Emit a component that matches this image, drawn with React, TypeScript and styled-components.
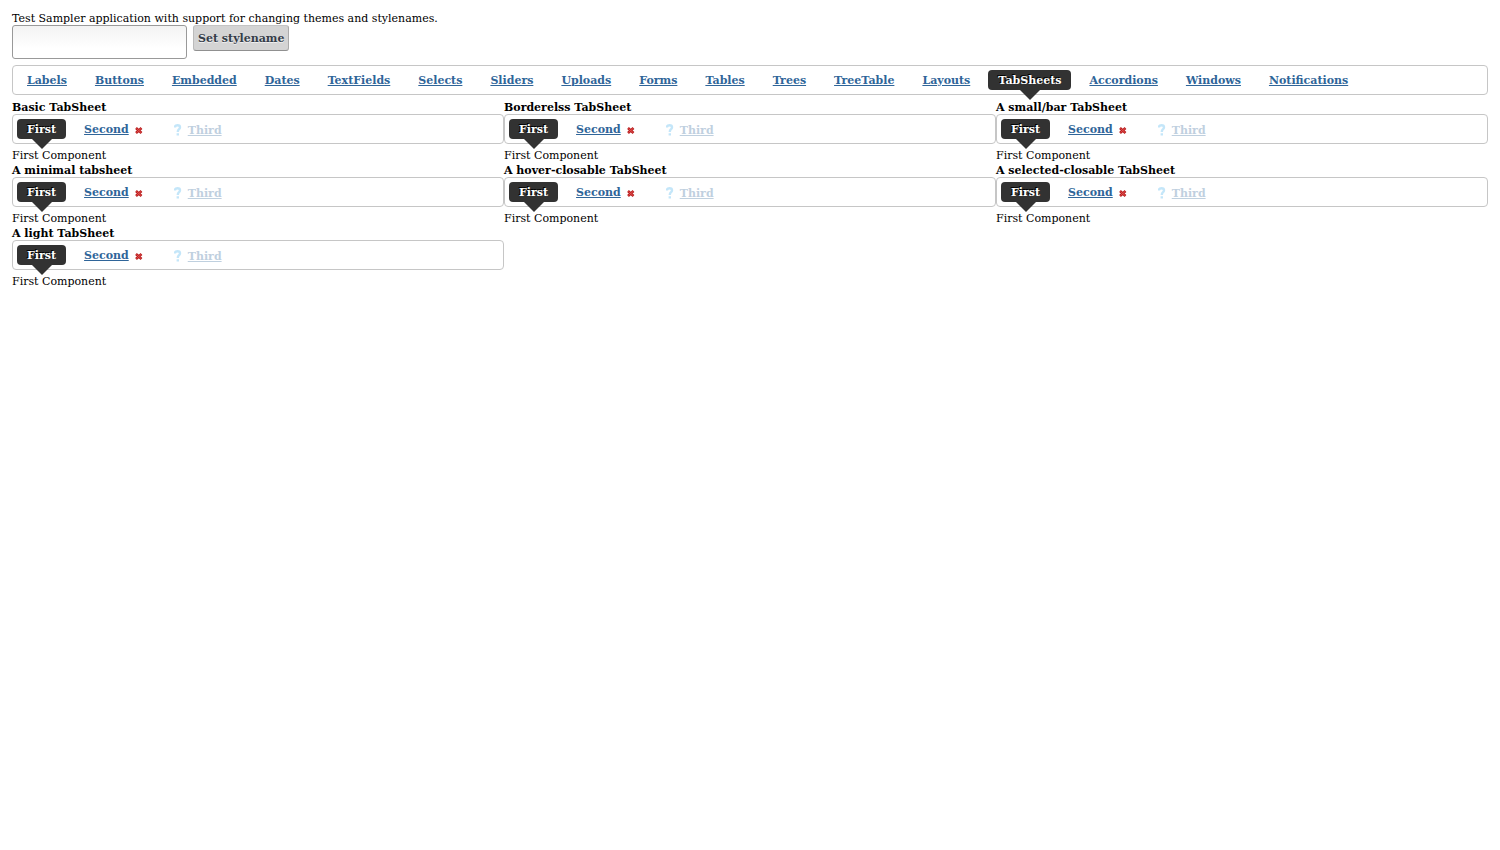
import React from "react";
import styled, { createGlobalStyle } from "styled-components";

const GlobalStyle = createGlobalStyle`
  body {
    margin: 0;
    background: #fff;
    color: #000;
    font: 11px/14px "DejaVu Serif", serif;
  }
`;

const Page = styled.main`
  padding: 12px;
`;

const Intro = styled.div`
  line-height: 13px;
`;

const Toolbar = styled.form`
  display: flex;
  align-items: flex-start;
  gap: 6px;
  margin-bottom: 6px;
`;

const StyleField = styled.input`
  box-sizing: border-box;
  width: 175px;
  height: 34px;
  padding: 4px;
  border: 1px solid #999;
  border-radius: 3px;
  background: linear-gradient(#f3f3f3, #fff 70%);
  font: inherit;
`;

const SetButton = styled.button`
  box-sizing: border-box;
  height: 26px;
  padding: 2px 4px 0;
  border: 1px solid;
  border-color: #c4c4c4 #aaa #909090 #bbb;
  border-radius: 3px;
  background: #d4d4d4;
  color: #343c48;
  font: bold 11px/14px "DejaVu Serif", serif;
  text-shadow: 0 1px 0 #f0f0f0;
`;

const Bar = styled.div`
  box-sizing: border-box;
  display: flex;
  gap: 8px;
  height: 30px;
  padding: 4px;
  border: 1px solid #c6c6c6;
  border-radius: 4px;
  margin-bottom: 5px;
`;

const Tab = styled.div<{ $selected?: boolean; $disabled?: boolean }>`
  position: relative;
  display: flex;
  height: 20px;
  padding: 0 10px;
  border-radius: 4px;
  background: ${(p) => (p.$selected ? "#323232" : "transparent")};
  opacity: ${(p) => (p.$disabled ? 0.3 : 1)};

  &::after {
    content: ${(p) => (p.$selected ? '""' : "none")};
    position: absolute;
    top: 100%;
    left: 50%;
    margin-left: -10px;
    border: 10px solid transparent;
    border-top-color: #323232;
    border-bottom: 0;
  }
`;

const TabLink = styled.a<{ $selected?: boolean; $icon?: boolean }>`
  color: ${(p) => (p.$selected ? "#fff" : "#2f6599")};
  font-weight: bold;
  line-height: ${(p) => (p.$icon ? 24 : 22)}px;
  white-space: nowrap;
  text-decoration: ${(p) => (p.$selected ? "none" : "underline")};
  text-shadow: ${(p) => (p.$selected ? "-1px -1px 0 #000" : "none")};
`;

const CloseButton = styled.button`
  display: flex;
  align-items: center;
  margin-left: 5px;
  padding: 3px 0 0;
  border: 0;
  background: none;
`;

const HelpIcon = styled.svg`
  margin: 5px 6px 0 3px;
`;

const Samples = styled.div`
  display: grid;
  grid-template-columns: repeat(3, minmax(0, 1fr));
`;

const Caption = styled.h2`
  margin: 0;
  padding-top: 1px;
  font-size: 11px;
  line-height: 13px;
`;

const Content = styled.div`
  line-height: 14px;
`;

const sections = [
  "Labels", "Buttons", "Embedded", "Dates", "TextFields", "Selects", "Sliders",
  "Uploads", "Forms", "Tables", "Trees", "TreeTable", "Layouts", "TabSheets",
  "Accordions", "Windows", "Notifications",
];

const samples = [
  "Basic TabSheet", "Borderelss TabSheet", "A small/bar TabSheet",
  "A minimal tabsheet", "A hover-closable TabSheet",
  "A selected-closable TabSheet", "A light TabSheet",
];

function TabSheet({ caption }: { caption: string }) {
  return (
    <section>
      <Caption>{caption}</Caption>
      <Bar>
        <Tab $selected>
          <TabLink href="#first" $selected>First</TabLink>
        </Tab>
        <Tab>
          <TabLink href="#second">Second</TabLink>
          <CloseButton type="button" aria-label="Close Second">
            <svg width="9" height="7" viewBox="0 0 9 7">
              <path d="M2 1 7.5 6M7.5 1 2 6" stroke="#b81c1c" strokeWidth="2.6" />
              <path d="M2.5 1.5 7 5.5M7 1.5 2.5 5.5" stroke="#e25050" strokeWidth="1" />
            </svg>
          </CloseButton>
        </Tab>
        <Tab $disabled>
          <HelpIcon width="8" height="12" viewBox="0 0 8 12" aria-hidden="true">
            <path
              d="M1 3.5V2.5Q1.5 1.2 3.5 1.2Q6 1.2 6 3.2Q6 4.4 4.8 5.4Q3.8 6.2 3.8 8M3.8 9.2V11.6"
              fill="none"
              stroke="#3fb0ee"
              strokeWidth="2.4"
            />
          </HelpIcon>
          <TabLink href="#third" $icon aria-disabled="true">Third</TabLink>
        </Tab>
      </Bar>
      <Content>First Component</Content>
    </section>
  );
}

export default function App() {
  return (
    <>
      <GlobalStyle />
      <Page>
        <Intro>Test Sampler application with support for changing themes and stylenames.</Intro>
        <Toolbar onSubmit={(e) => e.preventDefault()}>
          <StyleField type="text" aria-label="Stylename" />
          <SetButton type="submit">Set stylename</SetButton>
        </Toolbar>
        <Bar as="nav">
          {sections.map((name) => (
            <Tab key={name} $selected={name === "TabSheets"}>
              <TabLink href={`#${name}`} $selected={name === "TabSheets"}>{name}</TabLink>
            </Tab>
          ))}
        </Bar>
        <Samples>
          {samples.map((caption) => (
            <TabSheet key={caption} caption={caption} />
          ))}
        </Samples>
      </Page>
    </>
  );
}
